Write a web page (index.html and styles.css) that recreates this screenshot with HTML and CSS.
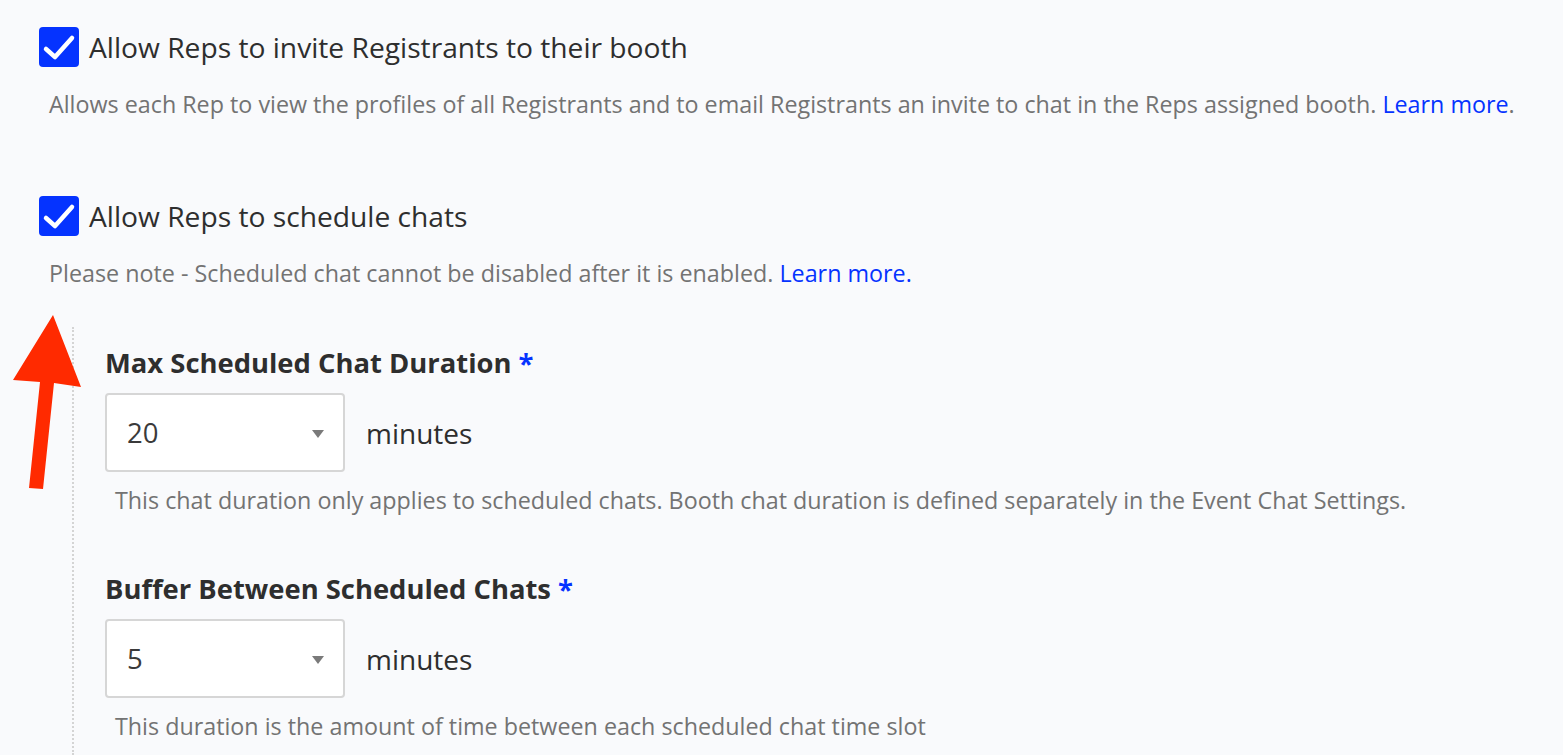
FILE: index.html
```html
<!DOCTYPE html>
<html lang="en">
<head>
    <meta charset="UTF-8">
    <meta name="viewport" content="width=device-width, initial-scale=1.0">
    <title>Rep settings</title>
    <link rel="stylesheet" href="styles.css">
</head>
<body>
    <div class="page">
        <div class="option">
            <label class="check-row">
                <span class="checkbox">
                    <svg viewBox="0 0 40 40" width="40" height="40"><polyline points="7,22 16,30 33,11" fill="none" stroke="#fff" stroke-width="4.5" stroke-linecap="round" stroke-linejoin="round"/></svg>
                </span>
                <span class="check-text">Allow Reps to invite Registrants to their booth</span>
            </label>
            <p class="desc">Allows each Rep to view the profiles of all Registrants and to email Registrants an invite to chat in the Reps assigned booth. <a href="#">Learn more</a>.</p>
        </div>

        <div class="option second">
            <label class="check-row">
                <span class="checkbox">
                    <svg viewBox="0 0 40 40" width="40" height="40"><polyline points="7,22 16,30 33,11" fill="none" stroke="#fff" stroke-width="4.5" stroke-linecap="round" stroke-linejoin="round"/></svg>
                </span>
                <span class="check-text">Allow Reps to schedule chats</span>
            </label>
            <p class="desc">Please note - Scheduled chat cannot be disabled after it is enabled. <a href="#">Learn more.</a></p>

            <div class="sub">
                <div class="field">
                    <div class="field-label">Max Scheduled Chat Duration <span class="req">*</span></div>
                    <div class="field-row">
                        <div class="select">20<span class="caret"></span></div>
                        <span class="unit">minutes</span>
                    </div>
                    <p class="help">This chat duration only applies to scheduled chats. Booth chat duration is defined separately in the Event Chat Settings.</p>
                </div>
                <div class="field">
                    <div class="field-label">Buffer Between Scheduled Chats <span class="req">*</span></div>
                    <div class="field-row">
                        <div class="select">5<span class="caret"></span></div>
                        <span class="unit">minutes</span>
                    </div>
                    <p class="help">This duration is the amount of time between each scheduled chat time slot</p>
                </div>
            </div>
        </div>
    </div>

    <svg class="arrow" width="100" height="500" viewBox="0 0 100 500">
        <polygon points="53,315 81,387 54,383 43,489 29,488 40,382 13,380" fill="#ff2a00"/>
    </svg>
</body>
</html>
```

FILE: styles.css
```css
body {
    margin: 0;
    background: #f9fafc;
    font-family: "Open Sans", Arial, sans-serif;
    color: #2e2e2e;
    overflow: hidden;
}

.page {
    padding: 27px 0 0 39px;
}

.check-row {
    display: flex;
    align-items: center;
    gap: 10px;
    height: 40px;
}

.checkbox {
    width: 40px;
    height: 40px;
    border-radius: 4px;
    background: #0533ff;
    display: block;
}

.checkbox svg {
    display: block;
}

.check-text {
    font-size: 28.2px;
    line-height: 40px;
}

.desc {
    margin: 21px 0 0;
    padding-left: 10px;
    font-size: 23.3px;
    line-height: 33px;
    color: #737373;
}

.desc a {
    color: #0533ff;
    text-decoration: none;
}

.second {
    margin-top: 75px;
}

.sub {
    margin: 37px 0 0 33px;
    border-left: 2px dotted #d4d4d4;
    padding: 18px 0 12px 31px;
}

.field + .field {
    margin-top: 54px;
}

.field-label {
    font-size: 27.4px;
    font-weight: 700;
    line-height: 36px;
    color: #2e2e2e;
}

.req {
    color: #0533ff;
}

.field-row {
    display: flex;
    align-items: center;
    gap: 21px;
    margin-top: 12px;
}

.select {
    position: relative;
    box-sizing: border-box;
    width: 240px;
    height: 79px;
    border: 2px solid #d6d6d6;
    border-radius: 4px;
    background: #fff;
    padding-left: 20px;
    display: flex;
    align-items: center;
    font-size: 27.5px;
    color: #3a3a3a;
}

.caret {
    position: absolute;
    right: 19px;
    top: 35px;
    border-left: 6px solid transparent;
    border-right: 6px solid transparent;
    border-top: 8px solid #7a7a7a;
}

.unit {
    font-size: 28px;
}

.help {
    margin: 12px 0 0;
    padding-left: 10px;
    font-size: 23.3px;
    line-height: 33px;
    color: #737373;
}

.arrow {
    position: absolute;
    left: 0;
    top: 0;
}
```
